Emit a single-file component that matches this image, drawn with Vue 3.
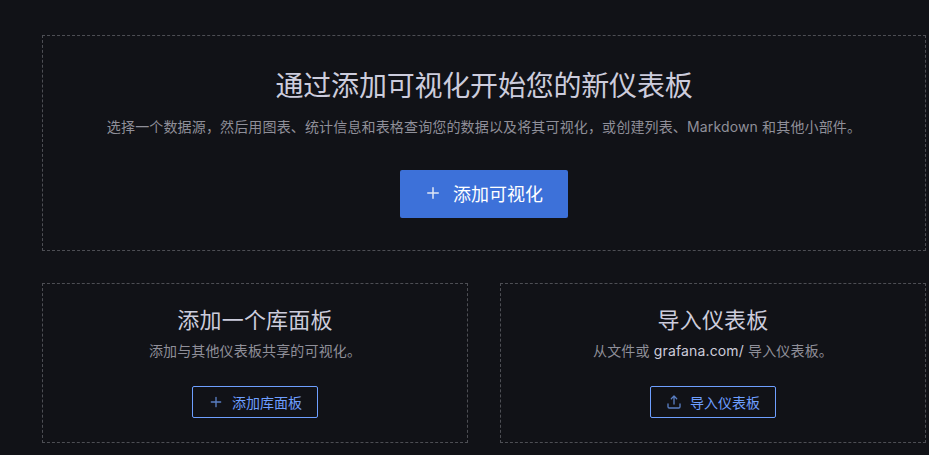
<template>
  <div class="page">
    <section class="box box--main">
      <h1 class="box__title">通过添加可视化开始您的新仪表板</h1>
      <p class="box__desc box__desc--main">
        选择一个数据源，然后用图表、统计信息和表格查询您的数据以及将其可视化，或创建列表、Markdown 和其他小部件。
      </p>
      <button class="btn btn--primary">
        <svg class="btn__icon" viewBox="0 0 24 24"><path d="M19 11h-6V5a1 1 0 0 0-2 0v6H5a1 1 0 0 0 0 2h6v6a1 1 0 0 0 2 0v-6h6a1 1 0 0 0 0-2Z" /></svg>
        添加可视化
      </button>
    </section>

    <section class="box">
      <h2 class="box__title box__title--small">添加一个库面板</h2>
      <p class="box__desc">添加与其他仪表板共享的可视化。</p>
      <button class="btn btn--outline">
        <svg class="btn__icon" viewBox="0 0 24 24"><path d="M19 11h-6V5a1 1 0 0 0-2 0v6H5a1 1 0 0 0 0 2h6v6a1 1 0 0 0 2 0v-6h6a1 1 0 0 0 0-2Z" /></svg>
        添加库面板
      </button>
    </section>

    <section class="box">
      <h2 class="box__title box__title--small">导入仪表板</h2>
      <p class="box__desc">从文件或 <a class="box__link">grafana.com/</a> 导入仪表板。</p>
      <button class="btn btn--outline">
        <svg class="btn__icon" viewBox="0 0 24 24"><path d="M8.71 7.71 11 5.41V15a1 1 0 0 0 2 0V5.41l2.29 2.3a1 1 0 0 0 1.42-1.42l-4-4a1 1 0 0 0-1.42 0l-4 4a1 1 0 0 0 1.42 1.42ZM21 14a1 1 0 0 0-1 1v4a1 1 0 0 1-1 1H5a1 1 0 0 1-1-1v-4a1 1 0 0 0-2 0v4a3 3 0 0 0 3 3h14a3 3 0 0 0 3-3v-4a1 1 0 0 0-1-1Z" /></svg>
        导入仪表板
      </button>
    </section>
  </div>
</template>

<script setup>
</script>

<style>
html,
body {
  margin: 0;
  height: 100%;
  background: #111217;
  overflow: hidden;
}
</style>

<style scoped>
.page {
  display: grid;
  grid-template-columns: 1fr 1fr;
  gap: 32px;
  width: 884px;
  padding: 35px 0 0 42px;
  font-family: Inter, "Noto Sans CJK SC", sans-serif;
}

.box {
  display: flex;
  flex-direction: column;
  align-items: center;
  padding: 22px 24px 24px;
  border: 1px dashed #4d4e54;
  text-align: center;
}

.box--main {
  grid-column: 1 / 3;
  padding: 33px 32px 32px;
}

.box__title {
  margin: 0 0 12px;
  font-size: 28px;
  font-weight: 400;
  letter-spacing: -0.2px;
  line-height: 35px;
  color: #ccccdc;
}

.box__title--small {
  margin-bottom: 6px;
  font-size: 22px;
  letter-spacing: 0.2px;
  line-height: 28px;
}

.box__desc {
  margin: 0 0 25px;
  font-size: 14px;
  letter-spacing: 0.15px;
  line-height: 21px;
  color: #8f8f99;
}

.box__desc--main {
  margin-bottom: 33px;
}

.box__link {
  color: #ccccdc;
}

.btn {
  display: inline-flex;
  align-items: center;
  height: 32px;
  padding: 0 15px;
  border: 1px solid #6e9fff;
  border-radius: 2px;
  background: transparent;
  color: #6e9fff;
  font-family: inherit;
  font-size: 14px;
  cursor: pointer;
}

.btn__icon {
  width: 16px;
  height: 16px;
  margin-right: 8px;
  fill: #5a7fc4;
}

.btn--primary {
  height: 48px;
  padding: 0 25px 2px 24px;
  border: none;
  background: #3d71d9;
  color: #fff;
  font-size: 18px;
}

.btn--primary .btn__icon {
  width: 18px;
  height: 18px;
  margin-right: 11px;
  fill: #dfe6f5;
}
</style>
